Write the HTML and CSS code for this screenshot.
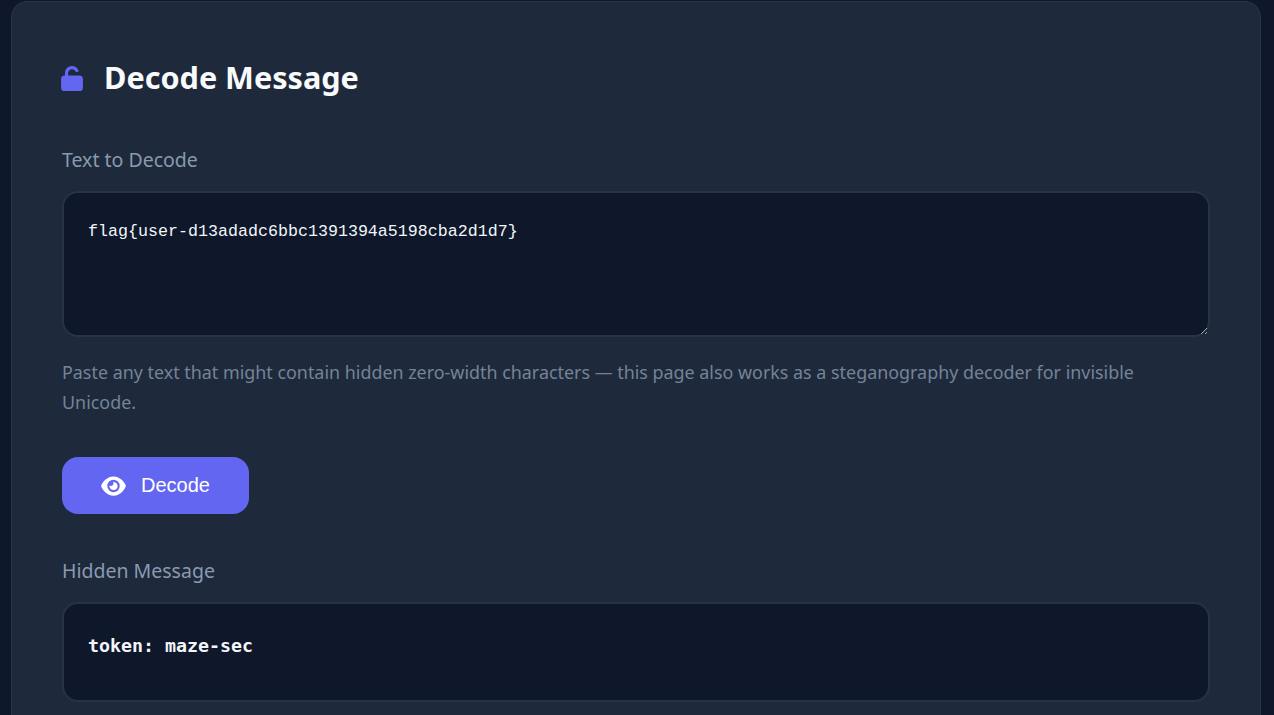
FILE: index.html
```html
<!DOCTYPE html>
<html lang="en">
<head>
    <meta charset="UTF-8">
    <meta name="viewport" content="width=device-width, initial-scale=1.0">
    <title>Decode Message</title>
    <link rel="stylesheet" href="styles.css">
</head>
<body>
    <div class="card">
        <h2 class="card-title">
            <svg class="title-icon" viewBox="0 0 448 512" aria-hidden="true"><path d="M144 144c0-44.2 35.8-80 80-80c31.9 0 59.4 18.6 72.3 45.7c7.6 16 26.7 22.8 42.6 15.2s22.8-26.7 15.2-42.6C331 33.7 281.5 0 224 0C144.5 0 80 64.5 80 144v48H64c-35.3 0-64 28.7-64 64V448c0 35.3 28.7 64 64 64H384c35.3 0 64-28.7 64-64V256c0-35.3-28.7-64-64-64H144V144z"/></svg>
            Decode Message
        </h2>

        <label class="field-label" for="decode-input">Text to Decode</label>
        <textarea class="decode-input" id="decode-input" spellcheck="false">flag{user-d13adadc6bbc1391394a5198cba2d1d7}</textarea>
        <p class="help-text">Paste any text that might contain hidden zero-width characters — this page also works as a steganography decoder for invisible Unicode.</p>

        <button class="decode-btn">
            <svg class="btn-icon" viewBox="0 0 576 512" aria-hidden="true"><path d="M288 32c-80.8 0-145.5 36.8-192.6 80.6C48.6 156 17.3 208 2.5 243.7c-3.3 7.9-3.3 16.7 0 24.6C17.3 304 48.6 356 95.4 399.4C142.5 443.2 207.2 480 288 480s145.5-36.8 192.6-80.6c46.8-43.5 78.1-95.4 93-131.1c3.3-7.9 3.3-16.7 0-24.6c-14.9-35.7-46.2-87.7-93-131.1C433.5 68.8 368.8 32 288 32zM144 256a144 144 0 1 1 288 0 144 144 0 1 1 -288 0zm144-64c0 35.3-28.7 64-64 64c-7.1 0-13.9-1.2-20.3-3.3c-5.5-1.8-11.9 1.6-11.7 7.4c.3 6.9 1.3 13.8 3.2 20.7c13.7 51.2 66.4 81.6 117.6 67.9s81.6-66.4 67.9-117.6c-11.1-41.5-47.8-69.4-88.6-71.1c-5.8-.2-9.2 6.1-7.4 11.7c2.1 6.4 3.3 13.2 3.3 20.3z"/></svg>
            Decode
        </button>

        <div class="field-label output-label">Hidden Message</div>
        <div class="output-box">token: maze-sec</div>
    </div>
</body>
</html>
```

FILE: styles.css
```css
html, body {
    height: 100%;
    overflow: hidden;
}

body {
    margin: 0;
    padding: 1px 13px 0 11px;
    box-sizing: border-box;
    background-color: #0f172a;
    font-family: 'Noto Sans', sans-serif;
    color: #f1f5f9;
}

.card {
    background-color: #1e293b;
    border: 1px solid #2a3548;
    border-radius: 16px;
    padding: 50px;
    height: 900px;
    box-sizing: border-box;
}

.card-title {
    display: flex;
    align-items: center;
    gap: 21px;
    margin: 0 0 45px;
    height: 50px;
    font-size: 30.6px;
    font-weight: 700;
    color: #f8fafc;
}

.title-icon {
    width: 22px;
    height: 25px;
    fill: #6366f1;
    margin-left: -1px;
    margin-top: 3px;
    flex-shrink: 0;
}

.field-label {
    display: block;
    font-size: 19.5px;
    line-height: 26px;
    color: #8a9ab0;
    margin-bottom: 18px;
}

.decode-input {
    display: block;
    width: 100%;
    height: 146px;
    box-sizing: border-box;
    padding: 26px 24px;
    background-color: #0f172a;
    border: 2px solid #283347;
    border-radius: 16px;
    color: #f1f5f9;
    font-family: 'Liberation Mono', monospace;
    font-size: 16.67px;
    line-height: 26px;
    outline: none;
}

.help-text {
    margin: 20px 0 0;
    font-size: 17.9px;
    line-height: 30px;
    color: #748398;
}

.decode-btn {
    display: flex;
    align-items: center;
    justify-content: center;
    gap: 15px;
    width: 187px;
    height: 57px;
    margin-top: 40px;
    border: none;
    border-radius: 16px;
    background-color: #6366f1;
    color: #ffffff;
    font-family: 'Liberation Sans', sans-serif;
    font-size: 20px;
    cursor: pointer;
}

.btn-icon {
    width: 25px;
    height: 22px;
    fill: #ffffff;
}

.output-label {
    margin-top: 44px;
}

.output-box {
    height: 100px;
    box-sizing: border-box;
    padding: 26px 24px;
    background-color: #0f172a;
    border: 2px solid #283347;
    border-radius: 16px;
    font-family: 'DejaVu Sans Mono', monospace;
    font-weight: 700;
    font-size: 18.3px;
    line-height: 32px;
    color: #f1f5f9;
}
```
